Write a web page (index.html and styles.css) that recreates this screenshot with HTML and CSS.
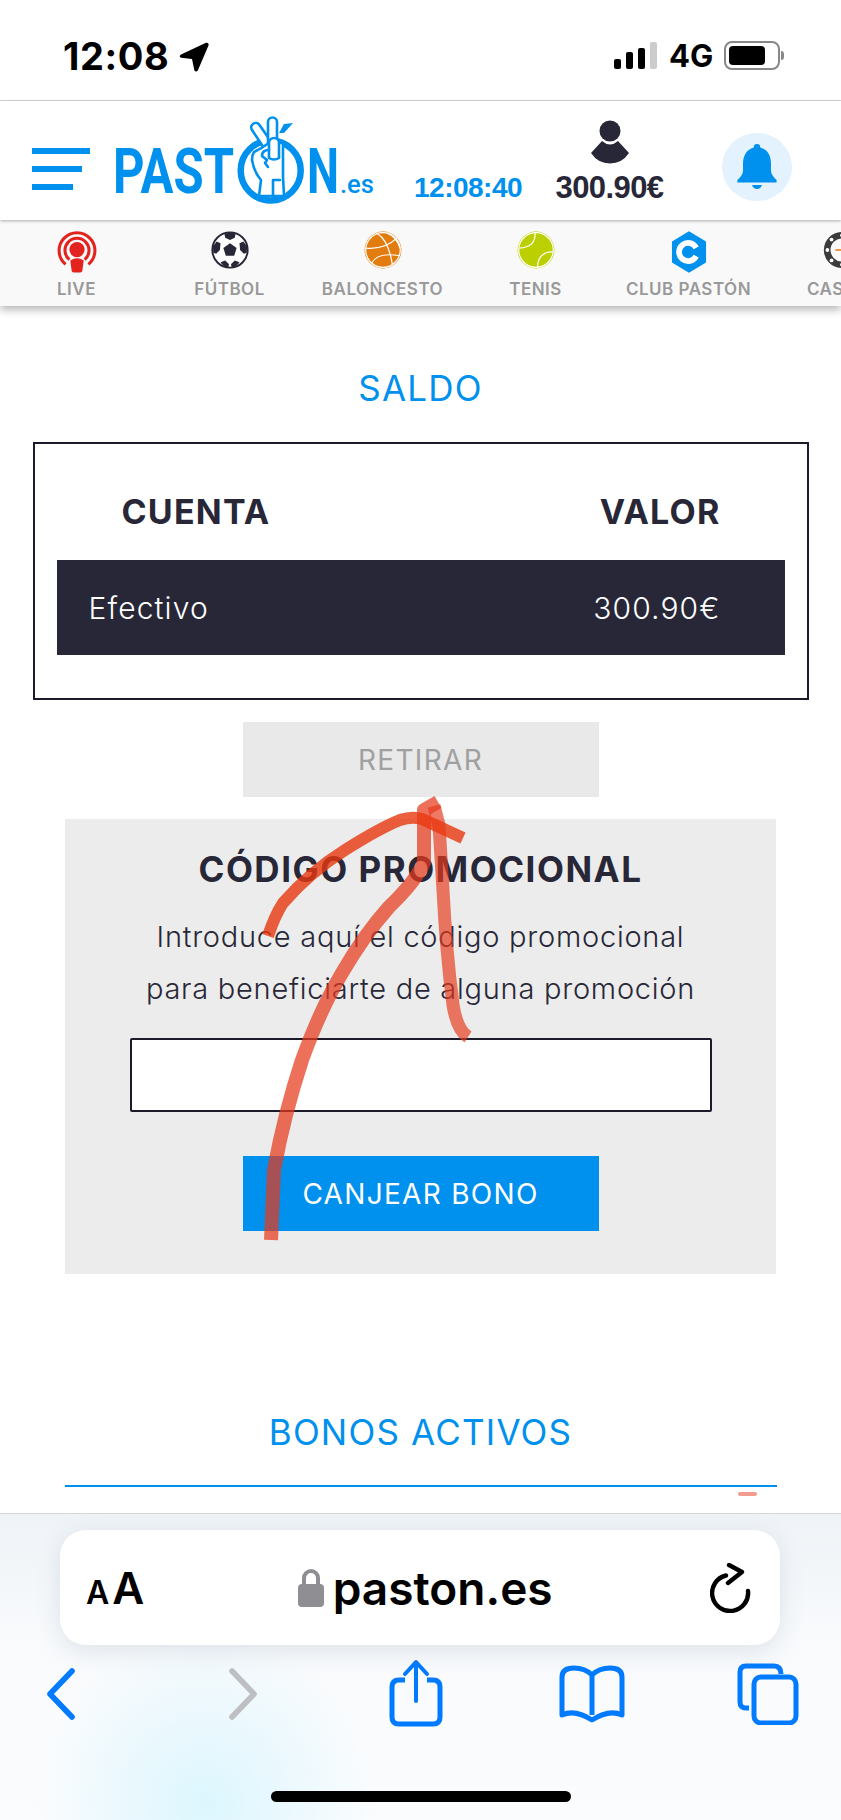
FILE: index.html
```html
<!DOCTYPE html>
<html lang="es">
<head>
  <meta charset="UTF-8">
  <title>Pastón - Saldo</title>
  <meta name="viewport" content="width=device-width, initial-scale=1.0">
  <link rel="stylesheet" href="styles.css">
</head>
<body>
  <div class="phone">

    <!-- Status bar -->
    <div class="status-bar">
      <div class="status-left">
        <span class="clock">12:08</span>
        <svg class="location" width="30" height="30" viewBox="0 0 30 30"><path d="M27 .8 L2 12.4 Q-.6 14.2 2 15.8 L13 17 L15.4 28.4 Q17 30.6 18.8 28.4 L29.6 3.2 Q30 .2 27 .8Z" fill="#000"/></svg>
      </div>
      <div class="status-right">
        <div class="signal"><i class="b1"></i><i class="b2"></i><i class="b3"></i><i class="b4"></i></div>
        <span class="network">4G</span>
        <div class="battery"><div class="battery-level"></div></div>
        <div class="battery-nub"></div>
      </div>
    </div>

    <!-- Header -->
    <header class="site-header">
      <div class="burger"><span></span><span></span><span></span></div>
      <svg class="logo" width="265" height="90" viewBox="115 115 265 90">
        <text x="113" y="193" class="logo-text" textLength="121" lengthAdjust="spacingAndGlyphs">PAST</text>
        <circle cx="270.7" cy="170.5" r="30" fill="none" stroke="#0090ee" stroke-width="6.5"/>
        <path d="M284 124 L293 123 L284 133 L279 133Z" fill="#0090ee"/>
        <g fill="#fff" stroke="#0090ee" stroke-width="2.6" stroke-linejoin="round" stroke-linecap="round">
          <path d="M264 148 L252 130 a4.4 4.4 0 0 1 7.5 -5 L272 143"/>
          <path d="M268 146 V122 a4.5 4.5 0 0 1 9 0 V146"/>
          <path d="M254 152 Q262 148 269 143 H283 V176 L284 196 H259 L261 180 Q254 172 252 160 Q252 155 254 152Z"/>
          <path d="M269 158 V143 a5 5 0 0 1 10 0 V158 Q274 161 269 158Z"/>
          <path d="M269 150 Q262 150 262 156 L267 160 L265 163 L268 167" fill="none"/>
          <path d="M274 180 H280" fill="none"/>
          <path d="M273 180 V196" fill="none"/>
        </g>
        <text x="307" y="193" class="logo-text" textLength="32" lengthAdjust="spacingAndGlyphs">N</text>
        <text x="340" y="193" class="logo-es" textLength="34" lengthAdjust="spacingAndGlyphs">.es</text>
      </svg>
      <div class="live-clock">12:08:40</div>
      <div class="account">
        <svg width="40" height="44" viewBox="0 0 40 44"><circle cx="20" cy="11" r="10.5" fill="#282737"/><path d="M12 21 Q20 28 28 21 L39 33 Q32 43.5 20 43.5 Q8 43.5 1 33Z" fill="#282737"/></svg>
        <div class="account-balance">300.90€</div>
      </div>
      <div class="bell">
        <svg width="40" height="46" viewBox="0 0 40 46"><path d="M20 0 a3.2 3.2 0 0 1 3.2 3.4 C31 5.6 34 12 34 20 V27 Q34 31 39.6 36 V38.4 H.4 V36 Q6 31 6 27 V20 C6 12 9 5.6 16.8 3.4 A3.2 3.2 0 0 1 20 0Z" fill="#0090ee"/><path d="M15 41 H25 Q23.6 45 20 45 Q16.4 45 15 41Z" fill="#0090ee"/></svg>
      </div>
    </header>

    <!-- Sports nav -->
    <nav class="sports-nav">
      <div class="sport">
        <svg class="tall" width="40" height="42" viewBox="0 0 42 44">
          <g fill="none" stroke="#e3231d" stroke-width="3.2"><path d="M9 35 A18.8 18.8 0 1 1 33 35"/><path d="M13 30 A12.6 12.6 0 1 1 29 30"/></g>
          <circle cx="21" cy="19.5" r="8" fill="#e3231d"/>
          <path d="M14 31 Q21 26 28 31 L26.6 42 Q26 43.6 24 43.6 H18 Q16 43.6 15.4 42Z" fill="#e3231d"/>
        </svg>
        <span>LIVE</span>
      </div>
      <div class="sport">
        <svg width="38" height="38" viewBox="0 0 40 40">
          <circle cx="20" cy="20" r="18.6" fill="#fff" stroke="#282737" stroke-width="2"/>
          <g fill="#282737">
            <path d="M20 13 L27 18 L24.4 26 H15.6 L13 18Z"/>
            <path d="M14 2.6 Q20 1 26 2.6 L25 7 L20 9.4 L15 7Z"/>
            <path d="M2 16 L6 11 L10 13 L9.4 20 L5.4 24 L2.4 23Z"/>
            <path d="M38 16 L34 11 L30 13 L30.6 20 L34.6 24 L37.6 23Z"/>
            <path d="M10 33 L15 31 L19 35 L18 38.6 Q13 38 10 33Z"/>
            <path d="M30 33 L25 31 L21 35 L22 38.6 Q27 38 30 33Z"/>
          </g>
        </svg>
        <span>FÚTBOL</span>
      </div>
      <div class="sport">
        <svg width="38" height="38" viewBox="0 0 40 40">
          <circle cx="20" cy="20" r="19.4" fill="#e27c0e"/>
          <g fill="none" stroke="#fff" stroke-width="1.3"><circle cx="20" cy="20" r="18.2"/><path d="M1.6 18 Q22 20 35 7"/><path d="M14 2.6 Q26 10 30 36"/><path d="M8 34 Q14 22 37 26"/><path d="M24 2 Q34 6 38 18"/></g>
        </svg>
        <span>BALONCESTO</span>
      </div>
      <div class="sport">
        <svg width="38" height="38" viewBox="0 0 40 40">
          <circle cx="20" cy="20" r="19.4" fill="#bccf00"/>
          <g fill="none" stroke="#fff" stroke-width="1.3"><circle cx="20" cy="20" r="18.2"/><path d="M19 2 Q20 17 2.4 18"/><path d="M37.6 22 Q22 22 21.6 38"/></g>
        </svg>
        <span>TENIS</span>
      </div>
      <div class="sport">
        <svg class="tall" width="36" height="42" viewBox="0 0 38 44">
          <path d="M19 0 L37 11 V33 L19 44 L1 33 V11Z" fill="#0090ee"/>
          <path d="M26.6 17.6 A9.6 9.6 0 1 0 26.6 26.4" fill="none" stroke="#fff" stroke-width="6"/>
        </svg>
        <span>CLUB PASTÓN</span>
      </div>
      <div class="sport">
        <svg width="38" height="38" viewBox="0 0 40 40">
          <circle cx="20" cy="20" r="15.6" fill="none" stroke="#3b3b3b" stroke-width="7"/>
          <g fill="#fff"><circle cx="20" cy="4.6" r="2"/><circle cx="4.6" cy="20" r="2"/><circle cx="9" cy="9" r="2"/><circle cx="9" cy="31" r="2"/><circle cx="20" cy="35.4" r="2"/></g>
          <path d="M13 20 H27" stroke="#e27c0e" stroke-width="1.6"/>
        </svg>
        <span>CASINO</span>
      </div>
    </nav>

    <!-- Balance -->
    <main class="content">
      <h2 class="section-title saldo-title">SALDO</h2>

      <div class="balance-box">
        <div class="balance-head">
          <span>CUENTA</span>
          <span>VALOR</span>
        </div>
        <div class="balance-row">
          <span>Efectivo</span>
          <span>300.90€</span>
        </div>
      </div>

      <button class="btn btn-disabled">RETIRAR</button>

      <section class="promo">
        <h3>CÓDIGO PROMOCIONAL</h3>
        <p>Introduce aquí el código promocional<br>para beneficiarte de alguna promoción</p>
        <input class="promo-input" type="text">
        <button class="btn btn-primary">CANJEAR BONO</button>
      </section>

      <h2 class="section-title bonos-title">BONOS ACTIVOS</h2>
      <div class="bonos-line"></div>
    </main>

    <!-- Safari toolbar -->
    <div class="browser-bar">
      <div class="url-pill">
        <div class="aa"><span class="aa-small">A</span><span class="aa-big">A</span></div>
        <div class="url">
          <svg width="26" height="38" viewBox="0 0 26 38"><path d="M6 17 V9 a7 7 0 0 1 14 0 V17" fill="none" stroke="#8e8e93" stroke-width="4"/><rect x="0" y="15" width="26" height="23" rx="4" fill="#8e8e93"/></svg>
          <span>paston.es</span>
        </div>
        <svg class="reload" width="42" height="50" viewBox="0 0 42 50"><path d="M16 12.5 A18 18 0 1 0 38 28" fill="none" stroke="#000" stroke-width="4.4" stroke-linecap="round"/><path d="M19 2 L32 9 L18 20" fill="none" stroke="#000" stroke-width="4.4" stroke-linecap="round" stroke-linejoin="round"/></svg>
      </div>
      <div class="toolbar">
        <svg width="30" height="52" viewBox="0 0 30 52"><path d="M26 3 L4 26 L26 49" fill="none" stroke="#007aff" stroke-width="5.6" stroke-linecap="round" stroke-linejoin="round"/></svg>
        <svg class="tool-forward" width="30" height="52" viewBox="0 0 30 52"><path d="M4 3 L26 26 L4 49" fill="none" stroke="#bdbfc3" stroke-width="5.6" stroke-linecap="round" stroke-linejoin="round"/></svg>
        <svg class="tool-share" width="54" height="68" viewBox="0 0 54 68"><path d="M16 21 H10 Q3 21 3 28 V58 Q3 65 10 65 H44 Q51 65 51 58 V28 Q51 21 44 21 H38" fill="none" stroke="#007aff" stroke-width="5"/><path d="M27 42 V4 M16 15 L27 3 L38 15" fill="none" stroke="#007aff" stroke-width="4" stroke-linecap="round" stroke-linejoin="round"/></svg>
        <svg class="tool-book" width="66" height="58" viewBox="0 0 66 58"><path d="M33 10 Q26 3 15 3 Q3 3 3 12 V50 Q16 44 33 55 Q50 44 63 50 V12 Q63 3 51 3 Q40 3 33 10Z M33 10 V50" fill="none" stroke="#007aff" stroke-width="5" stroke-linejoin="round"/></svg>
        <svg class="tool-tabs" width="62" height="62" viewBox="0 0 62 62"><path d="M12 45 H9 Q3 45 3 39 V9 Q3 3 9 3 H37 Q44 3 44 11" fill="none" stroke="#007aff" stroke-width="5"/><rect x="17" y="14" width="42" height="46" rx="7" fill="none" stroke="#007aff" stroke-width="5"/></svg>
      </div>
      <div class="home-indicator"></div>
    </div>

    <!-- Hand drawn arrow over the screenshot -->
    <svg class="scribble" width="841" height="1820" viewBox="0 0 841 1820">
      <g fill="none" stroke-linecap="butt" stroke-linejoin="round">
        <path d="M271 1240 L274 1170 Q284 1115 302 1060 Q320 1010 342 973 Q364 935 389 907 Q417 880 424 862 V810 L438 802" stroke="#e6391c" stroke-opacity=".72" stroke-width="14"/>
        <path d="M468 1037 Q457 1030 453 1005 Q446 950 443 890 L439 825 L434 806" stroke="#e6391c" stroke-opacity=".68" stroke-width="13"/>
        <path d="M268 936 Q275 915 283 903 Q310 872 345 850 Q380 828 400 820 Q412 816 422 819 L463 838" stroke="#e8380f" stroke-opacity=".8" stroke-width="12"/>
        <path d="M740 1494 H755" stroke="#e6391c" stroke-opacity=".5" stroke-width="4" stroke-linecap="round"/>
      </g>
    </svg>
  </div>
</body>
</html>
```

FILE: styles.css
```css
/* Reset & base */
*, *::before, *::after {
  box-sizing: border-box;
}
html, body {
  margin: 0;
  padding: 0;
  background: #fff;
}
body {
  font-family: Inter, "Liberation Sans", sans-serif;
  color: #282737;
}

.phone {
  position: relative;
  width: 841px;
  height: 1820px;
  overflow: hidden;
  display: flex;
  flex-direction: column;
}

/* Status bar */
.status-bar {
  height: 101px;
  flex: none;
  border-bottom: 1px solid #d8d8d8;
  display: flex;
  justify-content: space-between;
  padding: 41px 57px 0 63px;
}
.status-left {
  display: flex;
  align-items: flex-start;
}
.clock {
  font-size: 38px;
  font-weight: 700;
  letter-spacing: 0.6px;
  line-height: 30px;
  color: #000;
}
.location {
  margin: 1px 0 0 10px;
}
.status-right {
  display: flex;
  align-items: flex-start;
}
.signal {
  display: flex;
  align-items: flex-end;
  gap: 5px;
  height: 28px;
}
.signal i {
  display: block;
  width: 7px;
  background: #000;
  border-radius: 2px;
}
.signal .b1 { height: 10px; }
.signal .b2 { height: 17px; }
.signal .b3 { height: 21px; }
.signal .b4 { height: 27px; background: #ccc; }
.network {
  width: 41px;
  font-size: 31px;
  font-weight: 700;
  line-height: 28px;
  white-space: nowrap;
  margin: 1px 14px 0 12px;
  color: #000;
}
.battery {
  width: 56px;
  height: 29px;
  border: 2px solid #888;
  border-radius: 8px;
  padding: 3px;
}
.battery-level {
  width: 36px;
  height: 100%;
  background: #000;
  border-radius: 4px;
}
.battery-nub {
  width: 3px;
  height: 9px;
  margin: 10px 0 0 1px;
  background: #888;
  border-radius: 0 3px 3px 0;
}

/* Header */
.site-header {
  height: 119px;
  flex: none;
  position: relative;
  z-index: 3;
  display: flex;
  align-items: flex-start;
  background: #fff;
  box-shadow: 0 1px 3px rgba(0, 0, 0, 0.3);
}
.burger {
  display: flex;
  flex-direction: column;
  align-items: flex-start;
  gap: 12px;
  width: 83px;
  margin: 47px 0 0 32px;
}
.burger span {
  display: block;
  height: 6px;
  background: #0090ee;
}
.burger span:nth-child(1) { width: 58px; }
.burger span:nth-child(2) { width: 50px; }
.burger span:nth-child(3) { width: 41px; }
.logo {
  margin-top: 14px;
  flex: none;
}
.logo-text {
  font-family: Roboto, sans-serif;
  font-weight: 700;
  font-size: 63px;
  fill: #0090ee;
}
.logo-es {
  font-family: Roboto, sans-serif;
  font-weight: 500;
  font-size: 25px;
  fill: #0090ee;
}
.live-clock {
  font-family: "Liberation Sans", sans-serif;
  font-weight: 700;
  font-size: 28px;
  letter-spacing: -0.5px;
  color: #0090ee;
  margin: 71px 0 0 34px;
  width: 140px;
}
.account {
  width: 109px;
  margin-left: 1px;
  display: flex;
  flex-direction: column;
  align-items: center;
  padding-top: 19px;
}
.account-balance {
  font-family: "Liberation Sans", sans-serif;
  font-weight: 700;
  font-size: 31px;
  letter-spacing: -0.6px;
  margin-top: 6px;
  white-space: nowrap;
}
.bell {
  width: 70px;
  height: 68px;
  margin: 32px 0 0 58px;
  border-radius: 50%;
  background: #e3f2fd;
  display: flex;
  align-items: center;
  justify-content: center;
}

/* Sports nav */
.sports-nav {
  height: 86px;
  flex: none;
  position: relative;
  z-index: 2;
  display: flex;
  background: #f9f9f9;
  box-shadow: 0 4px 8px rgba(0, 0, 0, 0.28);
}
.sport {
  width: 153px;
  flex: none;
  height: 86px;
  padding-top: 11px;
  display: flex;
  flex-direction: column;
  align-items: center;
  font-size: 17px;
  font-weight: 600;
  letter-spacing: 0.5px;
  color: #999;
  white-space: nowrap;
}
.sport svg {
  flex: none;
  margin-bottom: 10px;
}
.sport svg.tall {
  margin-bottom: 6px;
}

/* Balance */
.content {
  flex: 1;
  display: flex;
  flex-direction: column;
  align-items: center;
  background: #fff;
}
.section-title {
  margin: 0;
  font-size: 35px;
  font-weight: 400;
  letter-spacing: 1.2px;
  line-height: 40px;
  color: #0090ee;
}
.saldo-title {
  margin-top: 62px;
}
.balance-box {
  width: 776px;
  height: 258px;
  margin-top: 34px;
  border: 2px solid #1c1b2b;
  padding: 0 22px;
}
.balance-head {
  height: 116px;
  padding: 18px 64px 0 65px;
  display: flex;
  align-items: center;
  justify-content: space-between;
  font-size: 34px;
  font-weight: 700;
  letter-spacing: 1.2px;
}
.balance-row {
  height: 95px;
  padding: 0 64px 0 32px;
  display: flex;
  align-items: center;
  justify-content: space-between;
  background: #282737;
  color: #fff;
  font-size: 30px;
  font-weight: 300;
  letter-spacing: 1.1px;
}

.btn {
  display: block;
  width: 356px;
  height: 75px;
  border: 0;
  font-family: inherit;
  font-size: 28px;
  font-weight: 400;
  letter-spacing: 1.3px;
}
.btn-disabled {
  margin-top: 22px;
  background: #e9e9e9;
  color: #a0a0a0;
}
.btn-primary {
  margin: 44px auto 0;
  background: #0090ee;
  color: #fff;
}

.promo {
  width: 711px;
  height: 455px;
  margin-top: 22px;
  padding-top: 28px;
  background: #ececec;
  text-align: center;
}
.promo h3 {
  margin: 0;
  font-size: 35px;
  font-weight: 700;
  letter-spacing: 1.5px;
  line-height: 44px;
}
.promo p {
  margin: 20px 0 0;
  font-size: 29px;
  font-weight: 300;
  letter-spacing: 0.75px;
  line-height: 52px;
}
.promo-input {
  display: block;
  width: 582px;
  height: 74px;
  margin: 23px auto 0;
  background: #fff;
  border: 2px solid #1c1b2b;
  border-radius: 2px;
}

.bonos-title {
  margin-top: 138px;
}
.bonos-line {
  width: 712px;
  height: 2px;
  margin-top: 33px;
  background: #0090ee;
}

/* Safari toolbar */
.browser-bar {
  height: 307px;
  flex: none;
  position: relative;
  border-top: 1px solid #d4d6d9;
  background:
    radial-gradient(circle 170px at 205px 290px, #dcf6fe 0%, rgba(220, 246, 254, 0) 100%),
    linear-gradient(#eff3f7, #f8fafc 40%, #fbfcfe);
}
.url-pill {
  width: 720px;
  height: 115px;
  margin: 16px 0 0 60px;
  padding: 0 28px 0 26px;
  display: flex;
  align-items: center;
  justify-content: space-between;
  background: #fff;
  border-radius: 26px;
  box-shadow: 0 6px 24px rgba(90, 110, 140, 0.16);
}
.aa {
  display: flex;
  align-items: baseline;
  gap: 3px;
  font-weight: 600;
  color: #000;
  line-height: 1;
}
.aa-small { font-size: 32px; }
.aa-big { font-size: 44px; }
.url {
  display: flex;
  align-items: center;
  gap: 9px;
  margin-left: -4px;
  font-size: 46px;
  font-weight: 600;
  color: #000;
}
.toolbar {
  height: 72px;
  margin-top: 13px;
  padding-left: 46px;
  display: flex;
  align-items: center;
}
.tool-forward { margin-left: 152px; }
.tool-share { margin: 0 0 3px 131px; }
.tool-book { margin-left: 116px; }
.tool-tabs { margin-left: 112px; }
.home-indicator {
  position: absolute;
  left: 271px;
  bottom: 18px;
  width: 300px;
  height: 11px;
  border-radius: 6px;
  background: #000;
}

/* Scribble overlay */
.scribble {
  position: absolute;
  top: 0;
  left: 0;
  pointer-events: none;
  z-index: 5;
}
```
